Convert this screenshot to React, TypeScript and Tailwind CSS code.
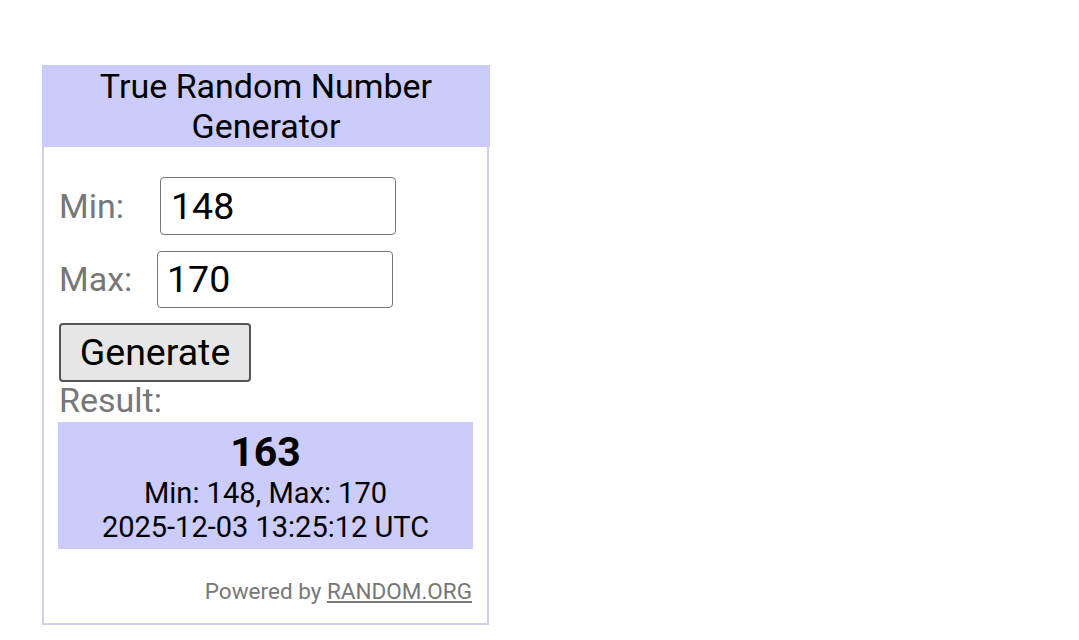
import React from "react";

export default function App() {
  return (
    <div className="min-h-[640px] w-[1079px] bg-white" style={{ fontFamily: "Roboto, 'Liberation Sans', sans-serif" }}>
      <div className="pt-[65px] pl-[42px]">
        <div className="w-[448px]">
          <div className="h-[82px] bg-[#ccccfa] text-center text-[34px] leading-[40px] text-black pt-[1px]">
            True Random Number
            <br />
            Generator
          </div>
          <div className="border-x-2 border-b-2 border-[#d0d0ec] px-[14px] pb-[18px] w-[447px]">
            <div className="flex items-center pt-[30px]">
              <span className="w-[102px] pl-[1px] text-[34px] text-[#777777]">Min:</span>
              <div className="h-[58px] w-[236px] rounded-[4px] border border-[#767676] px-[10px] text-[37.5px] leading-[56px] text-black">148</div>
            </div>
            <div className="flex items-center mt-[16px]">
              <span className="w-[99px] pl-[1px] text-[34px] text-[#777777]">Max:</span>
              <div className="h-[57px] w-[236px] rounded-[4px] border border-[#767676] px-[9px] text-[37.5px] leading-[54px] text-black">170</div>
            </div>
            <div className="mt-[15px] pl-[1px]">
              <button className="h-[59px] w-[192px] rounded-[4px] border-2 border-[#555555] bg-[#e6e6e6] text-[37.5px] leading-[55px] text-black">
                Generate
              </button>
            </div>
            <div className="pl-[1px] text-[34px] leading-[38px] text-[#777777] -mt-[1px]">Result:</div>
            <div className="mt-[3px] h-[127px] w-[415px] bg-[#ccccfa] text-center text-black">
              <div className="pt-[6px] text-[41px] font-bold leading-[48px]">163</div>
              <div className="text-[29px] leading-[34px]">Min: 148, Max: 170</div>
              <div className="text-[29px] leading-[34px]">2025-12-03 13:25:12 UTC</div>
            </div>
            <div className="mt-[28px] text-right text-[22.5px] leading-[28px] text-[#777777] pr-[1px]">
              Powered by <span className="underline">RANDOM.ORG</span>
            </div>
          </div>
        </div>
      </div>
    </div>
  );
}
